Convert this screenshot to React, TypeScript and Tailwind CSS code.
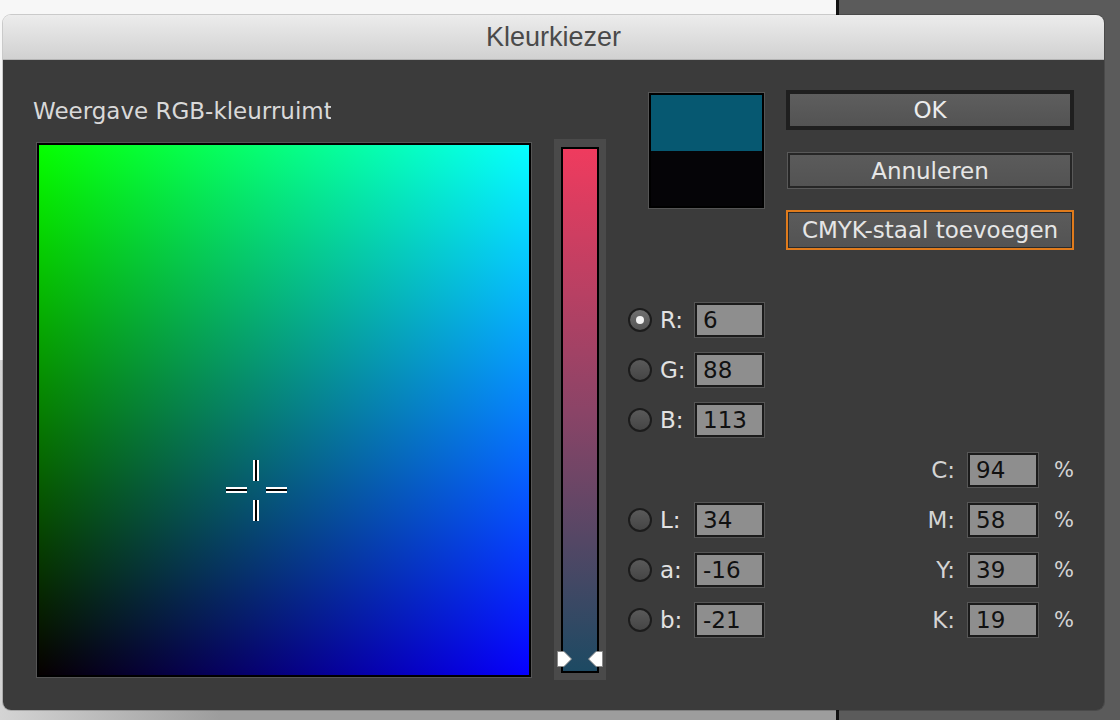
function Radio({ on }: { on?: boolean }) {
  return (
    <span
      className={`flex h-[24px] w-[24px] shrink-0 items-center justify-center rounded-full border-2 border-[#1c1c1c] ${
        on ? 'bg-[linear-gradient(to_bottom,#707070,#555555)]' : 'bg-[linear-gradient(to_bottom,#5a5a5a,#454545)]'
      }`}
    >
      {on && <span className="h-[8px] w-[8px] rounded-full bg-[#f4f4f4]" />}
    </span>
  );
}

function Field({ value, wide }: { value: string; wide?: boolean }) {
  return (
    <div className={`h-[36px] shrink-0 border border-[#565656] ${wide ? 'w-[72px]' : 'w-[71px]'}`}>
      <div className="flex h-full items-center border-2 border-[#1b1b1b] bg-[#8e8e8e] pl-[6px] text-[#111111]">
        {value}
      </div>
    </div>
  );
}

function ChannelRow({ label, value, on }: { label: string; value: string; on?: boolean }) {
  return (
    <div className="flex h-[36px] items-center">
      <Radio on={on} />
      <span className="ml-[8px] w-[34px] text-[#e2e2e2]">{label}</span>
      <Field value={value} />
    </div>
  );
}

function CmykRow({ label, value }: { label: string; value: string }) {
  return (
    <div className="flex h-[36px] items-center">
      <span className="w-[172px] text-right text-[#d4d4d4]">{label}</span>
      <div className="ml-[12px]">
        <Field value={value} wide />
      </div>
      <span className="ml-[15px] text-[21px] text-[#d4d4d4]">%</span>
    </div>
  );
}

function Arrow({ flip }: { flip?: boolean }) {
  return (
    <svg width="15" height="16" viewBox="0 0 15 16" className={flip ? 'scale-x-[-1]' : ''}>
      <polygon points="0.5,0.5 7,0.5 14.5,8 7,15.5 0.5,15.5" fill="#ffffff" stroke="#8a8a8a" strokeWidth="1" />
    </svg>
  );
}

export default function App() {
  const rgb = [
    { label: 'R:', value: '6', on: true },
    { label: 'G:', value: '88' },
    { label: 'B:', value: '113' },
  ];
  const lab = [
    { label: 'L:', value: '34' },
    { label: 'a:', value: '-16' },
    { label: 'b:', value: '-21' },
  ];
  const cmyk = [
    { label: 'C:', value: '94' },
    { label: 'M:', value: '58' },
    { label: 'Y:', value: '39' },
    { label: 'K:', value: '19' },
  ];

  return (
    <div className="h-[720px] w-[1120px] overflow-hidden bg-[linear-gradient(to_right,transparent_836px,#121212_836px,#121212_839px,#5b5b5b_839px),linear-gradient(to_bottom,#f7f7f7_360px,transparent_360px),linear-gradient(to_right,#d4d4d4,#9d9d9d_220px)] pl-[3px] pt-[15px]">
      <div className="flex h-[695px] w-[1101px] flex-col overflow-hidden rounded-[8px] shadow-[0_0_0_1px_rgba(0,0,0,0.18)]">
        {/* title bar */}
        <div className="h-[45px] shrink-0 border-b border-[#b4b4b4] bg-[linear-gradient(to_bottom,#ececec,#d1d1d1)] pt-[1px] text-center font-['Liberation_Sans',Arial,sans-serif] text-[27px] leading-[43px] text-[#4a4a4a]">
          Kleurkiezer
        </div>

        <div className="flex flex-1 items-start bg-[#3b3b3b] font-['DejaVu_Sans',sans-serif] text-[23px] leading-[28px]">
          {/* colour field */}
          <div className="ml-[30px] w-[500px] pt-[37px]">
            <div className="h-[28px] w-[298px] overflow-hidden whitespace-nowrap text-[#d9d9d9]">
              Weergave RGB-kleurruimte
            </div>
            <div className="ml-[3px] mt-[17px] h-[536px] w-[496px] border border-[#555555]">
              <div className="h-full border-2 border-black">
                <div className="relative h-full bg-[linear-gradient(to_bottom,#00ff00,#000000),linear-gradient(to_right,#060000,#0600ff)] bg-blend-screen">
                  <span className="absolute left-[214px] top-[315px] h-[21px] w-[6px] bg-[linear-gradient(to_right,#fff_2px,#000_2px,#000_4px,#fff_4px)]" />
                  <span className="absolute left-[214px] top-[355px] h-[21px] w-[6px] bg-[linear-gradient(to_right,#fff_2px,#000_2px,#000_4px,#fff_4px)]" />
                  <span className="absolute left-[187px] top-[342px] h-[6px] w-[21px] bg-[linear-gradient(to_bottom,#fff_2px,#000_2px,#000_4px,#fff_4px)]" />
                  <span className="absolute left-[227px] top-[342px] h-[6px] w-[21px] bg-[linear-gradient(to_bottom,#fff_2px,#000_2px,#000_4px,#fff_4px)]" />
                </div>
              </div>
            </div>
          </div>

          {/* slider */}
          <div className="relative ml-[21px] mt-[79px] h-[541px] w-[52px] shrink-0 bg-[#4a4a4a] px-[7px] pb-[7px] pt-[8px]">
            <div className="h-full border-2 border-black">
              <div className="h-full bg-[linear-gradient(to_bottom,#ef3b5e,#8b4467_50%,#1d4a63)]" />
            </div>
            <span className="absolute left-[3px] top-[512px] flex">
              <Arrow />
            </span>
            <span className="absolute left-[34px] top-[512px] flex">
              <Arrow flip />
            </span>
          </div>

          {/* swatch + channels */}
          <div className="ml-[22px] mt-[32px] w-[137px] shrink-0">
            <div className="ml-[20px] h-[117px] w-[117px] border border-[#555555]">
              <div className="flex h-full flex-col border-2 border-black">
                <div className="h-[56px] bg-[#065871]" />
                <div className="flex-1 bg-[#050407]" />
              </div>
            </div>
            <div className="mt-[93px] flex flex-col gap-[14px]">
              {rgb.map((r) => (
                <ChannelRow key={r.label} {...r} />
              ))}
            </div>
            <div className="mt-[64px] flex flex-col gap-[14px]">
              {lab.map((r) => (
                <ChannelRow key={r.label} {...r} />
              ))}
            </div>
          </div>

          {/* buttons + cmyk */}
          <div className="ml-[21px] mt-[30px] w-[288px] shrink-0">
            <div className="flex h-[40px] items-center justify-center border-4 border-[#1f1f1f] bg-[linear-gradient(to_bottom,#5e5e5e,#535353)] text-[#ececec]">
              OK
            </div>
            <div className="mx-[1px] mt-[22px] h-[37px] border border-[#595959]">
              <div className="flex h-full items-center justify-center border-2 border-[#262626] bg-[linear-gradient(to_bottom,#5b5b5b,#535353)] text-[#e6e6e6]">
                Annuleren
              </div>
            </div>
            <div className="mt-[21px] h-[40px] border-2 border-[#e07b1c]">
              <div className="flex h-full items-center justify-center border border-[#2a2a2a] bg-[linear-gradient(to_bottom,#5b5b5b,#535353)] text-[#e6e6e6]">
                CMYK-staal toevoegen
              </div>
            </div>
            <div className="mt-[202px] flex flex-col gap-[14px]">
              {cmyk.map((r) => (
                <CmykRow key={r.label} {...r} />
              ))}
            </div>
          </div>
        </div>
      </div>
    </div>
  );
}
